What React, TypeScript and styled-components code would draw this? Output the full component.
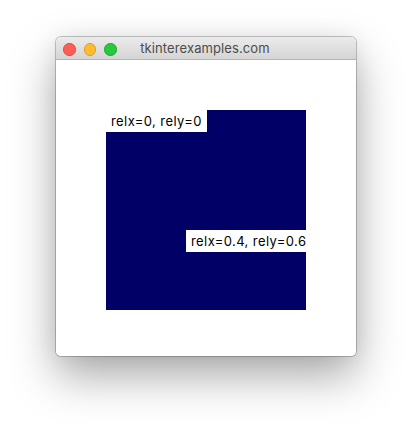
import React from "react";
import styled, { createGlobalStyle } from "styled-components";

const Global = createGlobalStyle`
  html, body { margin: 0; padding: 0; background: #ffffff; }
  body { width: 411px; height: 430px; overflow: hidden; }
`;

const Desktop = styled.div`
  width: 411px;
  height: 430px;
  padding: 37px 0 0 56px;
  box-sizing: border-box;
  background: #ffffff;
`;

const Window = styled.div`
  width: 300px;
  height: 319px;
  border-radius: 5px;
  overflow: hidden;
  background: #ffffff;
  box-shadow: 0 0 0 1px rgba(0, 0, 0, 0.22), 0 20px 45px rgba(0, 0, 0, 0.34),
    0 0 22px rgba(0, 0, 0, 0.06);
  display: flex;
  flex-direction: column;
`;

const TitleBar = styled.div`
  position: relative;
  height: 22px;
  flex: none;
  background: linear-gradient(#ebebeb, #d5d5d5);
  border-bottom: 1px solid #b4b4b4;
  display: flex;
  align-items: center;
  justify-content: center;
`;

const Lights = styled.div`
  position: absolute;
  left: 7px;
  top: 6px;
  display: flex;
  gap: 8px;
`;

const Light = styled.span<{ $fill: string; $edge: string }>`
  width: 12.5px;
  height: 12.5px;
  border-radius: 50%;
  box-sizing: border-box;
  background: ${(p) => p.$fill};
  border: 0.5px solid ${(p) => p.$edge};
`;

const Title = styled.span`
  font-family: Inter, "Liberation Sans", sans-serif;
  font-size: 13px;
  color: #4c4c4c;
  letter-spacing: 0.1px;
  transform: translateX(-1px);
`;

const Content = styled.div`
  flex: 1;
  padding: 50px;
  background: #ffffff;
`;

const Frame = styled.div`
  position: relative;
  width: 200px;
  height: 200px;
  background: #000066;
  overflow: hidden;
`;

const Label = styled.div<{ $relx: number; $rely: number }>`
  position: absolute;
  left: ${(p) => p.$relx * 100}%;
  top: ${(p) => p.$rely * 100}%;
  height: 22px;
  padding: 0 5px 0 5px;
  background: #ffffff;
  color: #000000;
  font-family: Inter, "Liberation Sans", sans-serif;
  font-size: 13px;
  letter-spacing: 0.42px;
  line-height: 22px;
  white-space: nowrap;
`;

export default function App() {
  return (
    <>
      <Global />
      <Desktop>
        <Window>
          <TitleBar>
            <Lights>
              <Light $fill="#fd5f57" $edge="#df4640" />
              <Light $fill="#febc2e" $edge="#dea126" />
              <Light $fill="#28c840" $edge="#1aab2c" />
            </Lights>
            <Title>tkinterexamples.com</Title>
          </TitleBar>
          <Content>
            <Frame>
              <Label $relx={0} $rely={0}>relx=0, rely=0</Label>
              <Label $relx={0.4} $rely={0.6}>relx=0.4, rely=0.6</Label>
            </Frame>
          </Content>
        </Window>
      </Desktop>
    </>
  );
}
